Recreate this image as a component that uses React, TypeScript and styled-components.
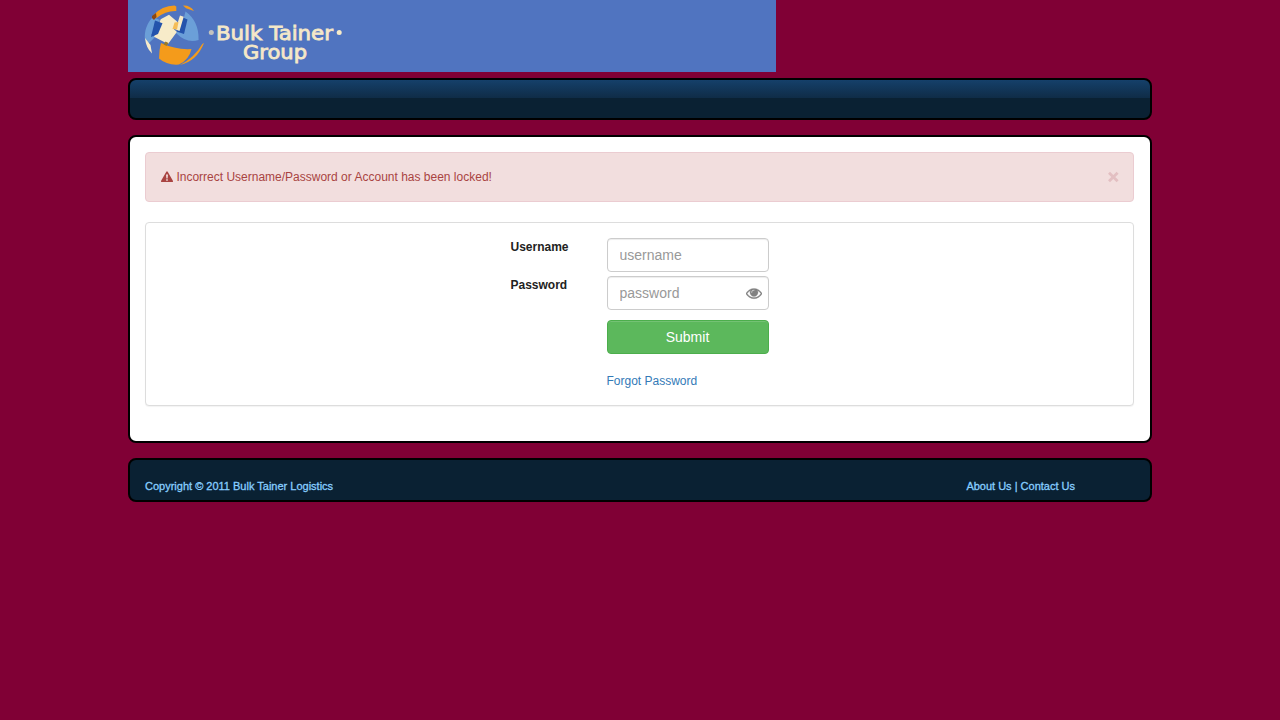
import React from "react";
import styled, { createGlobalStyle } from "styled-components";

const GlobalStyle = createGlobalStyle`
  *, *::before, *::after { box-sizing: border-box; }
  body {
    margin: 0;
    background: #800035;
    color: #333;
    font-family: Arial, "Liberation Sans", sans-serif;
    font-size: 12px;
    line-height: 20px;
  }
`;

const Page = styled.div`
  width: 1024px;
  margin: 0 auto;
`;

const Banner = styled.header`
  width: 648px;
  height: 72px;
  background: #5074c0;
  svg { display: block; }
`;

const Bar = styled.div`
  border: 2px solid #000;
  border-radius: 8px;
  background-color: #0a2133;
`;

const NavBar = styled(Bar)`
  height: 42px;
  margin-top: 6px;
  background-image: linear-gradient(#15406a, #0f2c47);
  background-size: 100% 18px;
  background-repeat: no-repeat;
`;

const Content = styled.main`
  height: 308px;
  margin-top: 15px;
  padding: 15px 16px 0 15px;
  border: 2px solid #000;
  border-radius: 8px;
  background: #fff;
`;

const Alert = styled.div`
  display: flex;
  align-items: center;
  height: 50px;
  padding: 0 14px 0 15px;
  border: 1px solid #ebccd1;
  border-radius: 4px;
  background: #f2dede;
  color: #a94442;
`;

const AlertText = styled.span`
  flex: 1;
  margin-left: 3.4px;
`;

const CloseButton = styled.button`
  display: flex;
  padding: 0;
  border: 0;
  background: none;
  color: #e3bfc2;
`;

const Panel = styled.form`
  height: 184px;
  margin-top: 20px;
  padding: 15px 0 0 364.5px;
  border: 1px solid #ddd;
  border-radius: 4px;
  background: #fff;
  box-shadow: 0 1px 1px rgba(0, 0, 0, 0.05);
`;

const Field = styled.div`
  display: grid;
  grid-template-columns: 96px 162px;
  height: 34px;
  margin-bottom: 4px;
`;

const Label = styled.label`
  font-weight: bold;
  line-height: 18px;
  color: #222;
`;

const InputBox = styled.div`
  display: flex;
  align-items: center;
  border: 1px solid #ccc;
  border-radius: 4px;
  padding: 0 6px 0 12px;
  box-shadow: inset 0 1px 1px rgba(0, 0, 0, 0.075);
`;

const Input = styled.input`
  flex: 1;
  min-width: 0;
  height: 30px;
  padding: 0;
  border: 0;
  outline: 0;
  background: transparent;
  font: 14px/20px Arial, "Liberation Sans", sans-serif;
  &::placeholder { color: #999; opacity: 1; }
`;

const Submit = styled.button`
  display: block;
  width: 162px;
  height: 34px;
  margin: 10px 0 0 96px;
  border: 1px solid #4cae4c;
  border-radius: 4px;
  background: #5cb85c;
  box-shadow: inset 0 1px 0 rgba(255, 255, 255, 0.15);
  color: #fff;
  font: 14px/20px Arial, "Liberation Sans", sans-serif;
`;

const ForgotLink = styled.a`
  display: inline-block;
  margin: 17px 0 0 96px;
  color: #337ab7;
`;

const Footer = styled(Bar)`
  display: flex;
  justify-content: space-between;
  height: 44px;
  margin-top: 15px;
  padding: 16px 75px 0 15px;
  color: #87ceff;
  font-size: 11px;
  -webkit-text-stroke: 0.3px #87ceff;
`;

function Logo() {
  return (
    <svg width="240" height="72" viewBox="0 0 240 72" role="img">
      <path d="M17 40C16 31 19 23 25 17L32 20L23 35L27 37L21 43Z" fill="#6b9fd8" />
      <path d="M17 38L22.500 45L24 53.500Q18 48 17 38Z" fill="#f7ebc9" />
      <path d="M25 15.500Q34 5.500 46.500 5.500L48.300 6.500V11Q38 10.500 28.500 18Z" fill="#f49b1b" />
      <path d="M24 16L28 13L28.500 17L26 20L24 18Z" fill="#8b4714" />
      <path d="M57.500 11.500Q71 21 70.600 40Q59 44 48 33Q55 24 57.500 11.500Z" fill="#6b9fd8" />
      <path d="M32.700 19.300L41 14.700L49.300 21.700L46 29.500L49 31.700L40 44L26 36.700Z" fill="#f7ebc9" />
      <path d="M27 20.500L34.500 23.300L30 34L23 37Z" fill="#2453ac" />
      <path d="M54 17L59.500 19.500L56 34L48.500 31.500Z" fill="#2453ac" />
      <path d="M52 15.500L55.700 16.700L51.500 31L47.500 29.500Z" fill="#f7ebc9" />
      <path d="M46.500 22.500L50.500 22L49 29.500L44.500 29Z" fill="#f5bd58" />
      <path d="M33 43Q48 50 63.500 49Q61 60 51 64.500Q39 65.500 31 58.500Q31 50 33 43Z" fill="#f49b1b" />
      <path d="M37.500 41.500L40.500 43L38.500 46L35.500 44.500Z" fill="#9a7a27" />
      <path d="M55 5.500Q62 5 66 11L58 8.200Z" fill="#f49b1b" />
      <path d="M76 43Q69 61 52 65Q67 57 74.300 44Z" fill="#f49b1b" />
      <circle cx="83.300" cy="32.500" r="2.500" fill="#c3c4bf" />
      <circle cx="211.200" cy="32.500" r="2.500" fill="#f7ebc9" />
      <g fill="#f5e8c8" stroke="#f5e8c8" strokeWidth=".8" fontFamily="'DejaVu Sans', sans-serif" fontSize="19.500">
        <text x="88" y="40" textLength="117" lengthAdjust="spacingAndGlyphs">Bulk Tainer</text>
        <text x="115" y="58.500" textLength="64" lengthAdjust="spacingAndGlyphs">Group</text>
      </g>
    </svg>
  );
}

function WarningIcon() {
  return (
    <svg width="12" height="12" viewBox="0 0 12 12">
      <path
        d="M5.300 .7Q6 -.4 6.700 .7L11.900 9.800Q12.300 11 11.200 11H.8Q-.3 11 .1 9.800ZM5 3.500L5.400 7.500H6.600L7 3.500ZM5.200 8.300V9.700H6.800V8.300Z"
        fill="currentColor"
        fillRule="evenodd"
      />
    </svg>
  );
}

function CloseIcon() {
  return (
    <svg width="12" height="12" viewBox="0 0 12 12">
      <path d="M2 1.700L10.600 10.300M10.600 1.700L2 10.300" stroke="currentColor" strokeWidth="2.800" />
    </svg>
  );
}

function EyeIcon() {
  return (
    <svg width="16" height="16" viewBox="0 0 1792 1792">
      <path
        fill="#808080"
        stroke="#808080"
        strokeWidth="35"
        d="M1664 960q-152-236-381-353 61 104 61 225 0 185-131.500 316.500t-316.500 131.500-316.500-131.500-131.500-316.500q0-121 61-225-229 117-381 353 133 205 333.500 326.500t434.500 121.500 434.500-121.500 333.500-326.500zm-720-384q0-20-14-34t-34-14q-125 0-214.500 89.500t-89.500 214.500q0 20 14 34t34 14 34-14 14-34q0-86 61-147t147-61q20 0 34-14t14-34zm848 384q0 34-20 69-140 230-376.500 368.500t-499.500 138.500-499.500-139-376.500-368q-20-35-20-69t20-69q140-229 376.500-368t499.500-139 499.500 139 376.500 368q20 35 20 69z"
      />
    </svg>
  );
}

export default function App() {
  return (
    <Page>
      <GlobalStyle />
      <Banner><Logo /></Banner>
      <NavBar />
      <Content>
        <Alert role="alert">
          <WarningIcon />
          <AlertText>Incorrect Username/Password or Account has been locked!</AlertText>
          <CloseButton type="button" aria-label="Close"><CloseIcon /></CloseButton>
        </Alert>
        <Panel>
          <Field>
            <Label htmlFor="username">Username</Label>
            <InputBox><Input id="username" placeholder="username" /></InputBox>
          </Field>
          <Field>
            <Label htmlFor="password">Password</Label>
            <InputBox>
              <Input id="password" type="password" placeholder="password" />
              <EyeIcon />
            </InputBox>
          </Field>
          <Submit type="button">Submit</Submit>
          <ForgotLink>Forgot Password</ForgotLink>
        </Panel>
      </Content>
      <Footer as="footer">
        <span>Copyright © 2011 Bulk Tainer Logistics</span>
        <span>About Us | Contact Us</span>
      </Footer>
    </Page>
  );
}
